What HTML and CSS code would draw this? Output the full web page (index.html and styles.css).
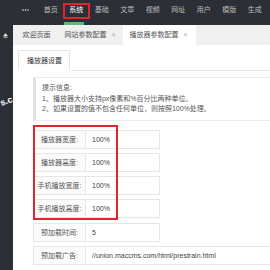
FILE: index.html
```html
<!DOCTYPE html>
<html lang="zh-CN">
<head>
<meta charset="utf-8">
<title>播放器参数配置</title>
<link rel="stylesheet" href="styles.css">
</head>
<body>
<header class="topbar">
  <div class="logo-space"></div>
  <nav class="nav">
    <a class="nav-item more"><svg class="dots" width="7" height="2" viewBox="0 0 7 2"><circle cx="1" cy="1" r="0.8" fill="#e8e8e8"/><circle cx="3.5" cy="1" r="0.8" fill="#e8e8e8"/><circle cx="6" cy="1" r="0.8" fill="#e8e8e8"/></svg></a>
    <a class="nav-item">首页</a>
    <a class="nav-item active">系统</a>
    <a class="nav-item">基础</a>
    <a class="nav-item">文章</a>
    <a class="nav-item">视频</a>
    <a class="nav-item">网址</a>
    <a class="nav-item">用户</a>
    <a class="nav-item">模版</a>
    <a class="nav-item">生成</a>
  </nav>
</header>
<div class="layout">
  <aside class="side">
    <svg class="side-icon" width="5" height="5" viewBox="0 0 5 5"><polygon points="2.5,0.3 4.8,3 0.2,3" fill="#e6e6e6"/><rect x="0.5" y="3.6" width="4" height="1" fill="#e6e6e6"/></svg>
  </aside>
  <main class="content">
    <div class="tabs">
      <div class="tab">欢迎页面</div>
      <div class="tab">网站参数配置<span class="close">×</span></div>
      <div class="tab on">播放器参数配置<span class="close">×</span></div>
    </div>
    <div class="page">
      <div class="card-title"><span class="card-tab">播放器设置</span></div>
      <div class="quote">
        <div>提示信息:</div>
        <div>1、播放器大小支持px像素和%百分比两种单位。</div>
        <div>2、如果设置的值不包含任何单位，则按照100%处理。</div>
      </div>
      <div class="form">
        <div class="row"><span class="label">播放器宽度:</span><span class="input">100%</span></div>
        <div class="row"><span class="label">播放器高度:</span><span class="input">100%</span></div>
        <div class="row"><span class="label">手机播放宽度:</span><span class="input">100%</span></div>
        <div class="row"><span class="label">手机播放高度:</span><span class="input">100%</span></div>
        <div class="row"><span class="label">预加载时间:</span><span class="input">5</span></div>
        <div class="row"><span class="label">预加载广告:</span><span class="input wide">//union.maccms.com/html/prestrain.html</span></div>
      </div>
    </div>
  </main>
</div>
<span class="watermark">s.c</span>
<div class="mark mark-nav"></div>
<div class="mark mark-form"></div>
</body>
</html>
```

FILE: styles.css
```css
* { box-sizing: border-box; }
html, body {
  margin: 0;
  padding: 0;
  width: 270px;
  height: 270px;
  overflow: hidden;
  background: #fff;
}
body {
  position: relative;
  font-family: "Liberation Sans", "Noto Sans CJK SC", sans-serif;
  font-size: 7px;
  color: #444;
}
.topbar {
  display: flex;
  height: 25px;
  background: #2c2f35;
}
.logo-space { width: 12.5px; flex: none; }
.nav { display: flex; }
.nav-item {
  position: relative;
  width: 25.5px;
  height: 20px;
  line-height: 20px;
  text-align: center;
  color: #bdbdbd;
  font-size: 7px;
}
.nav-item.more {
  display: flex;
  align-items: center;
  justify-content: center;
}
.dots { display: block; }
.nav-item.active { color: #fff; }
.nav-item.active::after {
  content: "";
  position: absolute;
  left: 0;
  top: 22px;
  width: 20px;
  height: 3px;
  background: #5fb878;
}
.layout {
  display: flex;
  height: 245px;
}
.side {
  width: 13px;
  flex: none;
  background: #2c2f35;
  padding-top: 8px;
  padding-left: 3px;
}
.side-icon { display: block; }
.content {
  flex: 1;
  min-width: 0;
}
.tabs {
  display: flex;
  height: 20px;
  background: #f0f0f0;
  padding-left: 2.5px;
}
.tab {
  height: 20px;
  line-height: 20px;
  padding: 0 7px;
  color: #555;
  white-space: nowrap;
}
.tab.on { background: #fff; padding-right: 8px; }
.close {
  margin-left: 5px;
  color: #aaa;
  font-size: 7px;
}
.page {
  padding: 5px 0 0 20px;
}
.card-title {
  display: flex;
  margin-left: -15px;
  border-bottom: 1px solid #e6e6e6;
  height: 21px;
}
.card-tab {
  height: 21px;
  line-height: 19px;
  padding: 0 7px 0 8px;
  border: 1px solid #e6e6e6;
  border-bottom-color: #fff;
  background: #fff;
  color: #333;
}
.quote {
  margin-top: 6px;
  border: 1px solid #ececec;
  border-right: 0;
  border-left: 3px solid #e2e2e2;
  padding: 5px 0 5px 6px;
  line-height: 10.5px;
  color: #555;
  white-space: nowrap;
  overflow: hidden;
}
.form {
  margin-top: 9px;
  display: flex;
  flex-direction: column;
  gap: 4.3px;
}
.row {
  display: flex;
  height: 19px;
}
.label {
  width: 53px;
  flex: none;
  border: 1px solid #e6e6e6;
  background: #fbfbfb;
  text-align: center;
  line-height: 17px;
  color: #555;
  white-space: nowrap;
}
.input {
  width: 74px;
  flex: none;
  border: 1px solid #e6e6e6;
  border-left: 0;
  padding-left: 6px;
  line-height: 17px;
  color: #444;
  white-space: nowrap;
}
.input.wide {
  flex: 1;
  width: auto;
  min-width: 0;
  border-right: 0;
  overflow: hidden;
}
.watermark {
  position: absolute;
  left: 0;
  top: 96px;
  color: #fff;
  font-size: 9px;
  font-weight: bold;
  transform: rotate(-20deg);
}
.mark {
  position: absolute;
  border: 2px solid #e0252c;
}
.mark-nav {
  left: 63px;
  top: 3px;
  width: 27px;
  height: 16px;
}
.mark-form {
  left: 33px;
  top: 125px;
  width: 85px;
  height: 95px;
}
```
